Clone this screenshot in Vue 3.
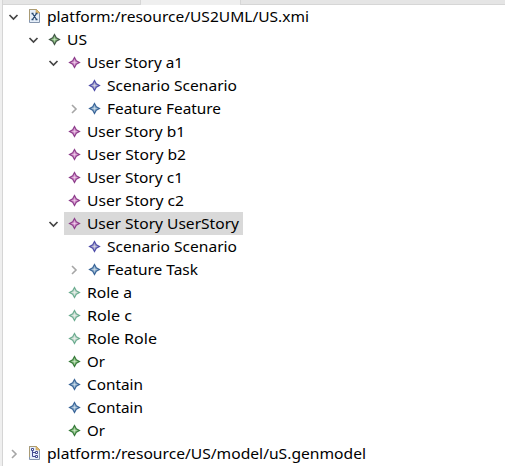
<script setup>
const purple = ['#8e3f8c', '#d391cb']
const indigo = ['#504eaa', '#a3a1c8']
const blue = ['#3b6699', '#8fb0cc']
const mint = ['#6dad91', '#cbdcd2']
const green = ['#397b3c', '#8cc283']
const rows = [
  { depth: 0, text: 'platform:/resource/US2UML/US.xmi', file: 'xmi', open: true, w: 262 },
  { depth: 1, text: 'US', color: ['#45594a', '#83b878'], open: true, w: 20 },
  { depth: 2, text: 'User Story a1', color: purple, open: true, w: 96 },
  { depth: 3, text: 'Scenario Scenario', color: indigo, w: 130 },
  { depth: 3, text: 'Feature Feature', color: blue, open: false, w: 114 },
  { depth: 2, text: 'User Story b1', color: purple, w: 98 },
  { depth: 2, text: 'User Story b2', color: purple, w: 99 },
  { depth: 2, text: 'User Story c1', color: purple, w: 96 },
  { depth: 2, text: 'User Story c2', color: purple, w: 97 },
  { depth: 2, text: 'User Story UserStory', color: purple, open: true, selected: true, w: 152 },
  { depth: 3, text: 'Scenario Scenario', color: indigo, w: 130 },
  { depth: 3, text: 'Feature Task', color: blue, open: false, w: 91 },
  { depth: 2, text: 'Role a', color: mint, w: 45 },
  { depth: 2, text: 'Role c', color: mint, w: 45 },
  { depth: 2, text: 'Role Role', color: mint, w: 70 },
  { depth: 2, text: 'Or', color: green, w: 18 },
  { depth: 2, text: 'Contain', color: blue, w: 56 },
  { depth: 2, text: 'Contain', color: blue, w: 56 },
  { depth: 2, text: 'Or', color: green, w: 18 },
  { depth: 0, text: 'platform:/resource/US/model/uS.genmodel', file: 'gen', open: false, w: 319 },
]
</script>

<template>
  <div class="panel">
    <div class="gutter"></div>
    <div class="main">
      <div class="tabs">
        <div class="tab first"></div>
        <div class="tab active"></div>
        <div class="tab rest"></div>
      </div>
      <div v-for="(r, i) in rows" :key="i" class="row">
        <span class="indent" :style="{ width: r.depth * 20 + 'px' }"></span>
        <svg class="chevron" width="21" height="23" viewBox="0 0 21 23" fill="none">
          <path v-if="r.open" d="M6.5 10 10.5 14l4-4" stroke="#454545" stroke-width="1.7" />
          <path v-else-if="r.open === false" d="m9 8 4 4-4 4" stroke="#a6a6a6" stroke-width="1.6" />
        </svg>
        <span class="item" :class="{ selected: r.selected }">
          <svg v-if="r.file" class="icon" width="23" height="23" viewBox="0 0 23 23">
            <path d="M5.5 4.5h7l3 3v10h-10z" fill="#e6effa" stroke="#8495ad" />
            <path d="M5.5 15V4.5h7" fill="none" stroke="#a99b75" />
            <path d="M12 4v4h4z" fill="#e0b86e" stroke="#c6a35a" stroke-width=".6" />
            <path v-if="r.file === 'xmi'" d="M7.5 8.5h2m2 0h2m-5 0 4 6m0-6-4 6m-1 0h2m2 0h2" fill="none" stroke="#28496f" stroke-width="1.3" />
            <g v-else fill="none" stroke="#424b91">
              <path d="M8.5 8v6.5h3M8.5 10.5h3" />
              <path d="M7.5 6.5h2v2h-2zM11.5 9.5h2v2h-2zM11.5 13.5h2v2h-2z" fill="#fff" />
            </g>
          </svg>
          <svg v-else class="icon" width="23" height="23" viewBox="0 0 23 23">
            <path d="m10.5 6.5 1.8 3.2 3.2 1.8-3.2 1.8-1.8 3.2-1.8-3.2-3.2-1.8 3.2-1.8z" :fill="r.color[1]" :stroke="r.color[0]" stroke-width="1.2" />
            <path d="M10.5 9.5v4M8.5 11.5h4" stroke="#fff" stroke-opacity=".35" />
          </svg>
          <svg class="label" :width="r.w + 4" height="23">
            <text x="0" y="17" :textLength="r.w" lengthAdjust="spacingAndGlyphs">{{ r.text }}</text>
          </svg>
        </span>
      </div>
    </div>
  </div>
</template>

<style>
body { overflow: hidden; background: #fff; }
</style>
<style scoped>
.panel { display: flex; width: 505px; height: 466px; background: #fff; }
.gutter { flex: none; width: 3px; box-sizing: border-box; background: #efefef; border-right: 1px solid #d5d5d5; }
.main { flex: 1; min-width: 0; }
.tabs { display: flex; height: 5px; }
.tab { box-sizing: border-box; background: #e5e5e5; border-bottom: 1px solid #d6d6d6; }
.first { width: 138px; border-right: 1px solid #d6d6d6; }
.active { width: 99px; background: #efefef; border-bottom: 0; }
.rest { flex: 1; border-left: 1px solid #d6d6d6; }
.row { display: flex; height: 23px; }
.indent, .chevron { flex: none; }
.item { display: flex; height: 23px; }
.item.selected { background: #d9d9d9; }
.icon, .label { display: block; flex: none; }
text { font: 15px "Noto Sans", "Open Sans", sans-serif; fill: #000; }
</style>
